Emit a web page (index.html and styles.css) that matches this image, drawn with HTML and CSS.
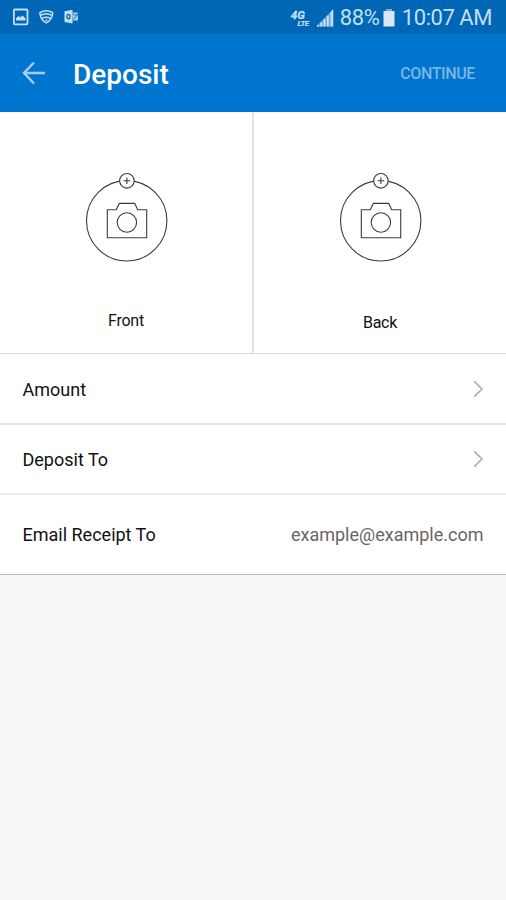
FILE: index.html
```html
<!DOCTYPE html>
<html lang="en">
<head>
<meta charset="utf-8">
<title>Deposit</title>
<link rel="stylesheet" href="styles.css">
</head>
<body>
<svg class="defs" width="0" height="0">
  <symbol id="camera" viewBox="0 0 100 105">
    <g fill="none" stroke="#3c3c3c" stroke-width="1.1">
      <circle cx="50.7" cy="55.8" r="40.2"/>
      <circle cx="50.9" cy="15.8" r="7.3" fill="#fff"/>
      <path d="M47.6 15.8h6.6M50.9 12.5v6.6"/>
      <path d="M31.3 44.8h9l3-6.4h15.4l3 6.4h9v28H31.3z"/>
      <circle cx="50.9" cy="57.5" r="9.7"/>
    </g>
  </symbol>
  <symbol id="chevron" viewBox="0 0 11 18">
    <path d="M1.2 1.3 9 9l-7.800 7.700" fill="none" stroke="#b0b0b0" stroke-width="1.7"/>
  </symbol>
</svg>
<div class="status">
  <svg class="status-left" width="80" height="34" viewBox="0 0 80 34">
    <rect x="13.900" y="9.500" width="13.600" height="14.800" rx="1" fill="none" stroke="#c5def1" stroke-width="1.800"/>
    <path d="M16 20.500v-2.200l2.700-2.200 1.800 1.200 2.200-1.800 2.800 3v2z" fill="#c5def1"/>
    <g fill="none" stroke="#c5def1" stroke-width="1.500">
      <path d="M39.900 12.700Q46.300 8.600 52.700 12.700C52.500 17.500 50.200 20.900 46.300 22.900 42.400 20.900 40.100 17.500 39.900 12.700z"/>
      <path d="M40.500 15.300q5.800-3.300 11.600 0M42 18.400q4.300-2.500 8.600 0"/>
    </g>
    <circle cx="46.300" cy="20.300" r="1.100" fill="#c5def1"/>
    <path d="M64.500 11.300l8-1.500v13.600l-8-1.500z" fill="#c5def1"/>
    <path d="M72.500 12.500h5.500v8h-5.500z" fill="#a9cdea"/>
    <path d="M73 13.500l2.400 2 2.600-2M73 19.500l5-5" fill="none" stroke="#1270bb"/>
    <ellipse cx="68.500" cy="16.600" rx="1.500" ry="2.200" fill="none" stroke="#0067b7" stroke-width="1.300"/>
  </svg>
  <div class="status-right">
    <span class="network"><b class="gen">4G</b><b class="lte">LTE</b></span>
    <svg class="signal" width="18" height="18" viewBox="0 0 18 18">
      <path d="M0 17.500 17.500 0v17.500z" fill="#68a5d6"/>
      <path d="M1 17.500v-1.500h2v1.500zM4.200 17.500v-4h2v4zM7.400 17.500v-7.200h2v7.200zM10.800 17.500V6.800h2v10.700zM14.500 17.500V3l2.500-2.500v17z" fill="#c5def1"/>
    </svg>
    <span class="percent">88%</span>
    <svg class="battery" width="12" height="18" viewBox="0 0 12 18">
      <path d="M3 0h6v2H3z" fill="#75add9"/><path d="M.500 2h11v15.500H.500z" fill="#d8e8f5"/>
    </svg>
    <span class="time">10:07 AM</span>
  </div>
</div>
<header class="header">
  <svg class="back" width="24" height="24" viewBox="0 0 24 24">
    <path d="M12 1.500 2 12l10 10.500M2 12h21" fill="none" stroke="#a6cdee" stroke-width="2.500"/>
  </svg>
  <h1 class="title">Deposit</h1>
  <span class="continue">CONTINUE</span>
</header>
<main>
  <div class="captures">
    <div class="capture front"><svg class="camera"><use href="#camera"/></svg><span class="caption">Front</span></div>
    <div class="capture rear"><svg class="camera"><use href="#camera"/></svg><span class="caption">Back</span></div>
  </div>
  <div class="row amount"><span class="label">Amount</span><svg class="chevron"><use href="#chevron"/></svg></div>
  <div class="row account"><span class="label">Deposit To</span><svg class="chevron"><use href="#chevron"/></svg></div>
  <div class="row email"><span class="label">Email Receipt To</span><span class="value">example@example.com</span></div>
</main>
</body>
</html>
```
FILE: styles.css
```css
* { box-sizing: border-box; }
body {
  margin: 0;
  min-height: 900px;
  background: #f7f7f7;
  color: #111;
  font-family: Roboto, "Liberation Sans", sans-serif;
}
svg { display: block; flex: none; }
.defs { position: absolute; }
.status {
  height: 34px;
  display: flex;
  justify-content: space-between;
  background: #0067b7;
  color: #c5def1;
}
.status-right {
  display: flex;
  align-items: center;
  padding: 2px 14px 0 0;
  white-space: nowrap;
}
.network {
  width: 18px;
  margin-right: 7px;
  padding-top: 2px;
  display: flex;
  flex-direction: column;
  font-style: italic;
}
.gen { font-size: 11.5px; line-height: 9px; -webkit-text-stroke: 0.3px; }
.lte { font-size: 8px; line-height: 9px; align-self: flex-end; margin-top: -1px; letter-spacing: -0.4px; -webkit-text-stroke: 0.2px; }
.signal { margin-right: 6px; }
.percent { font-size: 22px; line-height: 32px; width: 37px; letter-spacing: -0.4px; }
.battery { margin: 0 7px 0 6px; }
.time { font-size: 22px; line-height: 32px; letter-spacing: -0.45px; }
.header {
  height: 78px;
  display: flex;
  align-items: center;
  background: #0075cf;
  padding: 0 31px 0 22px;
}
.back { margin-top: -1px; }
.title {
  margin: 3px 0 0 27px;
  font-size: 28px;
  line-height: 34px;
  font-weight: 500;
  color: #fff;
}
.continue {
  margin-left: auto;
  margin-top: 1px;
  font-size: 16px;
  letter-spacing: -0.38px;
  font-weight: 500;
  color: #79b6e5;
}
.captures {
  height: 242px;
  display: grid;
  grid-template-columns: 254px 252px;
  background: #fff;
  border-bottom: 1px solid #dadada;
}
.capture {
  display: flex;
  flex-direction: column;
  align-items: center;
  padding-top: 53px;
}
.front { border-right: 2px solid #e3e3e3; }
.camera { width: 100px; height: 105px; }
.rear .camera { margin-right: 1px; }
.caption { font-size: 16px; line-height: 20px; margin-top: 41px; letter-spacing: -0.25px; }
.rear .caption { margin-top: 43px; }
.row {
  display: flex;
  align-items: center;
  justify-content: space-between;
  padding: 2px 22px 0 22.5px;
  background: #fff;
  font-size: 18px;
  line-height: 24px;
}
.amount { height: 71px; border-bottom: 2px solid #e3e3e3; }
.account { height: 70px; border-bottom: 2px solid #eee; }
.email { height: 80px; padding-top: 0; padding-right: 22.5px; border-bottom: 1px solid #bcbcbc; }
.chevron { width: 11px; height: 18px; margin-top: -2px; }
.value { color: #666; }
```
